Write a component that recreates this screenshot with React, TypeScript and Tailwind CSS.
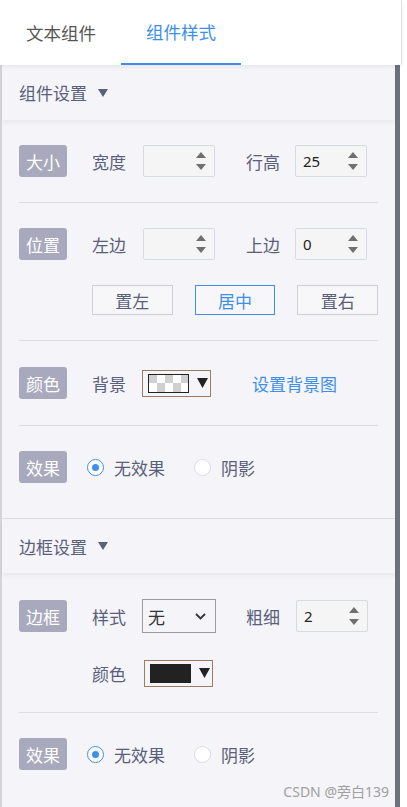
import React from "react";

const FONT = { fontFamily: '"Microsoft YaHei", "Noto Sans CJK SC", "Noto Sans", sans-serif' };

function Badge({ text }: { text: string }) {
  return (
    <div className="w-[48px] h-[32px] shrink-0 rounded-[3px] bg-[#a9a9bd] text-white text-[17px] flex items-center justify-center leading-none">
      {text}
    </div>
  );
}

function Label({ text, className = "" }: { text: string; className?: string }) {
  return <div className={"text-[17px] text-[#5a607a] leading-none shrink-0 " + className}>{text}</div>;
}

function NumInput({ value, className = "" }: { value?: string; className?: string }) {
  return (
    <div className={"w-[72px] h-[32px] shrink-0 bg-[#f5f5f6] border border-[#d6dbe0] rounded-[2px] flex items-center justify-between pl-[7px] pr-[8px] " + className}>
      <span className="text-[15px] text-[#222] leading-none" style={{ fontFamily: '"Noto Sans", "Open Sans", sans-serif' }}>{value ?? ""}</span>
      <div className="flex flex-col items-center gap-[6px]">
        <svg width="10" height="6" viewBox="0 0 10 6"><path d="M5 0 L10 6 L0 6 Z" fill="#707070" /></svg>
        <svg width="10" height="6" viewBox="0 0 10 6"><path d="M0 0 L10 0 L5 6 Z" fill="#707070" /></svg>
      </div>
    </div>
  );
}

function ColorPicker({ fill }: { fill: "checker" | "black" }) {
  return (
    <div className="w-[69px] h-[27px] shrink-0 border border-[#9b7c68] flex items-center pl-[5px] gap-[8px] bg-[#f4f4f9]">
      {fill === "checker" ? (
        <div className="w-[41px] h-[19px] border border-[#222] bg-white overflow-hidden">
          <svg width="39" height="17" viewBox="0 0 39 17">
            <rect x="0" y="0" width="39" height="17" fill="#fff" />
            <rect x="0" y="0" width="8" height="8" fill="#cfcfcf" />
            <rect x="16" y="0" width="8" height="8" fill="#cfcfcf" />
            <rect x="32" y="0" width="8" height="8" fill="#cfcfcf" />
            <rect x="8" y="8" width="8" height="9" fill="#cfcfcf" />
            <rect x="24" y="8" width="8" height="9" fill="#cfcfcf" />
          </svg>
        </div>
      ) : (
        <div className="w-[41px] h-[19px] bg-[#222]" />
      )}
      <svg width="11" height="10" viewBox="0 0 11 10"><path d="M0 0 L11 0 L5.5 10 Z" fill="#222" /></svg>
    </div>
  );
}

function Radio({ checked }: { checked?: boolean }) {
  return checked ? (
    <div className="w-[17px] h-[17px] rounded-full border border-[#3d8fe9] bg-white flex items-center justify-center shrink-0">
      <div className="w-[7px] h-[7px] rounded-full bg-[#3d8fe9]" />
    </div>
  ) : (
    <div className="w-[17px] h-[17px] rounded-full border border-[#dcdcdf] bg-white shrink-0" />
  );
}

function EffectRow() {
  return (
    <div className="flex items-center h-[32px]">
      <Badge text="效果" />
      <div className="ml-[20px]"><Radio checked /></div>
      <Label text="无效果" className="ml-[10px]" />
      <div className="ml-[29px]"><Radio /></div>
      <Label text="阴影" className="ml-[10px]" />
    </div>
  );
}

function SectionHeader({ text, h }: { text: string; h: string }) {
  return (
    <div className={"relative z-10 flex items-center pl-[17px] bg-[#f4f4f9] shadow-[0_3px_5px_rgba(0,0,0,0.05)] " + h}>
      <span className="text-[17px] text-[#5a607a] leading-none">{text}</span>
      <svg className="ml-[11px]" width="10" height="8" viewBox="0 0 10 8"><path d="M0 0 L10 0 L5 8 Z" fill="#5a607a" /></svg>
    </div>
  );
}

function Btn({ text, active }: { text: string; active?: boolean }) {
  return (
    <div
      className={
        "w-[81px] h-[30px] flex items-center justify-center text-[17px] leading-none bg-[#f7f7fa] border " +
        (active ? "border-[#3d8fe9] text-[#3d8fe9]" : "border-[#ccd0d6] text-[#5a607a]")
      }
    >
      {text}
    </div>
  );
}

export default function App() {
  return (
    <div className="w-[407px] h-[807px] overflow-hidden bg-white flex flex-col" style={FONT}>
      {/* Tab bar */}
      <div className="relative z-20 h-[65px] w-[402px] shrink-0 bg-white border-r border-[#e2e2e6] shadow-[0_2px_4px_rgba(0,0,0,0.06)] flex items-stretch">
        <div className="w-[121px] flex items-center pl-[26px] text-[17.5px] text-[#555] leading-none">文本组件</div>
        <div className="w-[120px] flex items-center justify-center text-[17.5px] text-[#3d8fe9] leading-none border-b-2 border-[#3d8fe9]">组件样式</div>
      </div>
      {/* Body */}
      <div className="flex flex-1 min-h-0">
        <div className="w-[395px] shrink-0 border-l-2 border-[#d4d4dc] bg-[#f4f4f9] flex flex-col relative">
          <SectionHeader text="组件设置" h="h-[55px]" />
          <div className="px-[17px]">
            {/* 大小 */}
            <div className="pt-[25px] pb-[25px] border-b border-[#dcdce6]">
              <div className="flex items-center h-[32px]">
                <Badge text="大小" />
                <Label text="宽度" className="ml-[25px]" />
                <NumInput className="ml-[17px]" />
                <Label text="行高" className="ml-[31px]" />
                <NumInput value="25" className="ml-[15px]" />
              </div>
            </div>
            {/* 位置 */}
            <div className="pt-[25px] pb-[25px] border-b border-[#dcdce6]">
              <div className="flex items-center h-[32px]">
                <Badge text="位置" />
                <Label text="左边" className="ml-[25px]" />
                <NumInput className="ml-[17px]" />
                <Label text="上边" className="ml-[31px]" />
                <NumInput value="0" className="ml-[15px]" />
              </div>
              <div className="flex items-center mt-[25px] pl-[73px] gap-[22px] h-[30px]">
                <Btn text="置左" />
                <Btn text="居中" active />
                <Btn text="置右" />
              </div>
            </div>
            {/* 颜色 */}
            <div className="pt-[26px] pb-[26px] border-b border-[#dcdce6]">
              <div className="flex items-center h-[32px]">
                <Badge text="颜色" />
                <Label text="背景" className="ml-[25px]" />
                <div className="ml-[16px]"><ColorPicker fill="checker" /></div>
                <div className="ml-[41px] text-[17px] text-[#3d8fe9] leading-none">设置背景图</div>
              </div>
            </div>
            {/* 效果 */}
            <div className="pt-[25px] pb-[35px]">
              <EffectRow />
            </div>
          </div>
          <div className="h-px bg-[#dcdce6]" />
          <SectionHeader text="边框设置" h="h-[54px]" />
          <div className="px-[17px]">
            <div className="pt-[26px] pb-[26px] border-b border-[#dcdce6]">
              <div className="flex items-center h-[34px]">
                <Badge text="边框" />
                <Label text="样式" className="ml-[25px]" />
                <div className="ml-[16px] w-[74px] h-[34px] shrink-0 border border-[#9b9b9b] bg-[#f4f4f9] flex items-center justify-between pl-[5px] pr-[9px]">
                  <span className="text-[17px] text-[#333] leading-none">无</span>
                  <svg width="11" height="7" viewBox="0 0 11 7"><path d="M1 1 L5.5 5.5 L10 1" fill="none" stroke="#333" strokeWidth="1.8" /></svg>
                </div>
                <Label text="粗细" className="ml-[30px]" />
                <NumInput value="2" className="ml-[16px]" />
              </div>
              <div className="flex items-center h-[26px] mt-[27px] pl-[73px]">
                <Label text="颜色" />
                <div className="ml-[18px]"><ColorPicker fill="black" /></div>
              </div>
            </div>
            <div className="pt-[25px]">
              <EffectRow />
            </div>
          </div>
          <div className="absolute right-[6px] bottom-[8px] text-[14px] text-[#a0a0a0] leading-none" style={{ fontFamily: '"Noto Sans", "Noto Sans CJK SC", sans-serif' }}>
            CSDN @旁白139
          </div>
        </div>
        <div className="w-[5px] shrink-0 bg-[#6b737b]" />
        <div className="flex-1 bg-white" />
      </div>
    </div>
  );
}
